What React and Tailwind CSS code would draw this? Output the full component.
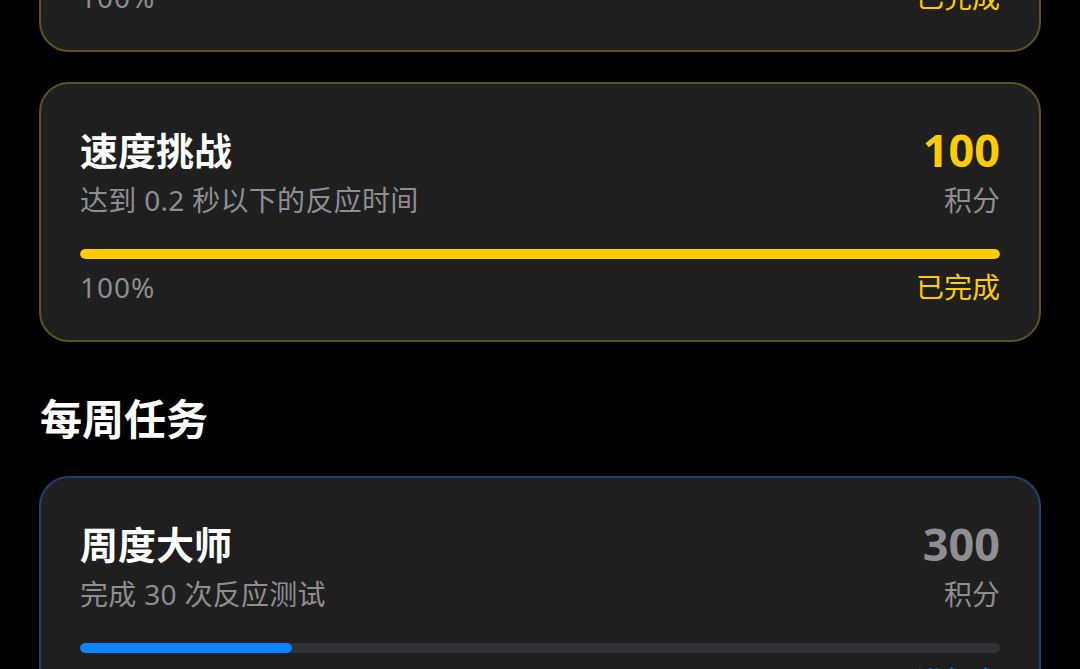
const tasks = {
  daily: [
    { title: '反应达人', desc: '完成 5 次反应测试', points: 50, progress: 100 },
    { title: '速度挑战', desc: '达到 0.2 秒以下的反应时间', points: 100, progress: 100 },
  ],
  weekly: [
    { title: '周度大师', desc: '完成 30 次反应测试', points: 300, progress: 23 },
  ],
};

function TaskCard({ task }) {
  const done = task.progress >= 100;
  return (
    <div
      className={`rounded-[30px] border-2 bg-[#1f1f1f] pl-[39px] pr-[39px] pt-[44px] pb-[35px] ${
        done ? 'border-[#5e5220]' : 'border-[#1d4170]'
      }`}
    >
      <div className="flex items-start justify-between">
        <div>
          <div className="text-[38px] leading-[44px] font-bold text-white">{task.title}</div>
          <div className="mt-[10px] text-[28px] leading-[36px] tracking-[0.3px] text-[#8e8e93]">{task.desc}</div>
        </div>
        <div className="flex flex-col items-end">
          <div
            className={`text-[45px] leading-[44px] font-bold ${done ? 'text-[#ffcc00]' : 'text-[#8e8e93]'}`}
          >
            {task.points}
          </div>
          <div className="mt-[10px] text-[28px] leading-[36px] text-[#8e8e93]">积分</div>
        </div>
      </div>
      <div className="mt-[31px] h-[10px] w-full overflow-hidden rounded-full bg-[#333335]">
        <div
          className={`h-full rounded-full ${done ? 'bg-[#ffcc00]' : 'bg-[#0a84ff]'}`}
          style={{ width: `${task.progress}%` }}
        />
      </div>
      <div className="mt-[10px] flex items-center justify-between text-[28px] leading-[36px]">
        <span className="tracking-[1px] text-[#8e8e93]">{task.progress}%</span>
        <span className={done ? 'text-[#ffcc00]' : 'text-[#0a84ff]'}>{done ? '已完成' : '进行中'}</span>
      </div>
    </div>
  );
}

export default function App() {
  return (
    <div
      className="h-[669px] w-[1080px] overflow-hidden bg-black"
      style={{ fontFamily: '"Noto Sans", "Noto Sans CJK SC", sans-serif' }}
    >
      <div className="-mt-[208px] px-[39px]">
        <div className="flex flex-col gap-[30px]">
          {tasks.daily.map((t) => (
            <TaskCard key={t.title} task={t} />
          ))}
        </div>
        <h2 className="mt-[53px] mb-[33px] pl-px text-[42px] leading-[48px] font-bold text-white">每周任务</h2>
        <div className="flex flex-col gap-[30px]">
          {tasks.weekly.map((t) => (
            <TaskCard key={t.title} task={t} />
          ))}
        </div>
      </div>
    </div>
  );
}
